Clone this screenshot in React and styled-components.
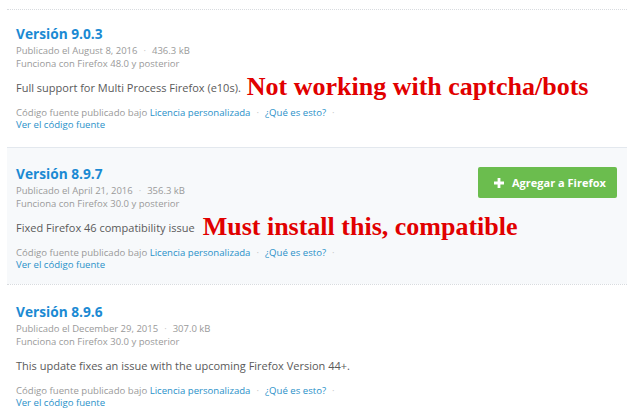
import React from "react";
import styled, { createGlobalStyle } from "styled-components";

const Global = createGlobalStyle`
  html, body { margin: 0; padding: 0; background: #fff; }
  body { font-family: "Open Sans", "Noto Sans", sans-serif; }
`;

const Page = styled.div`
  width: 640px;
  height: 419px;
  box-sizing: border-box;
  padding: 9px 13px 0 7px;
  overflow: hidden;
`;

const Section = styled.section`
  box-sizing: border-box;
  height: ${(p) => p.$h}px;
  padding: ${(p) => p.$pt}px 10px 0 9px;
  border-top: 1px ${(p) => (p.$alt ? "solid #e3e8ee" : "dotted #d8dbdf")};
  background: ${(p) => (p.$alt ? "#f7f9fb" : "#fff")};
`;

const Head = styled.div`
  display: flex;
  justify-content: space-between;
  align-items: flex-start;
`;

const Title = styled.h3`
  margin: 0;
  font-size: 13.7px;
  line-height: 20px;
  font-weight: 700;
  color: #1b8ad3;
`;

const Meta = styled.div`
  font-size: 9.5px;
  line-height: 13px;
  color: #9a9a9a;
`;

const Dot = styled.span`
  color: #c4c4c4;
  margin: 0 6px;
`;

const DescRow = styled.div`
  display: flex;
  align-items: center;
  height: 26px;
  margin-top: 4px;
`;

const Desc = styled.p`
  margin: 0;
  font-size: 11px;
  color: #5a5a5a;
`;

const Note = styled.span`
  font-family: "Liberation Serif", "DejaVu Serif", serif;
  font-weight: 700;
  font-size: 26px;
  color: #e10000;
  margin-left: ${(p) => p.$ml}px;
  line-height: 26px;
  white-space: nowrap;
`;

const Footer = styled.div`
  margin-top: 7px;
  font-size: 9.6px;
  line-height: 12px;
  color: #9a9a9a;
`;

const Link = styled.a`
  color: #2a91c9;
  text-decoration: none;
`;

const AddButton = styled.button`
  display: flex;
  align-items: center;
  gap: 8px;
  width: 139px;
  height: 31px;
  margin-top: 3px;
  padding: 0 0 0 16px;
  border: none;
  border-radius: 2px;
  background: #6bbd4e;
  color: #fff;
  font-family: "Open Sans", sans-serif;
  font-weight: 700;
  font-size: 11px;
  cursor: pointer;
`;

const Plus = () => (
  <svg width="10" height="10" viewBox="0 0 10 10">
    <path d="M3.6 0h2.8v3.6H10v2.8H6.4V10H3.6V6.4H0V3.6h3.6z" fill="#fff" />
  </svg>
);

const versions = [
  {
    v: "9.0.3",
    date: "August 8, 2016",
    size: "436.3 kB",
    ff: "48.0",
    desc: "Full support for Multi Process Firefox (e10s).",
    note: "Not working with captcha/bots",
    ml: 6,
    h: 138,
    pt: 14,
  },
  {
    v: "8.9.7",
    date: "April 21, 2016",
    size: "356.3 kB",
    ff: "30.0",
    desc: "Fixed Firefox 46 compatibility issue",
    note: "Must install this, compatible",
    ml: 8,
    alt: true,
    btn: true,
    h: 137,
    pt: 16,
  },
  {
    v: "8.9.6",
    date: "December 29, 2015",
    size: "307.0 kB",
    ff: "30.0",
    desc: "This update fixes an issue with the upcoming Firefox Version 44+.",
    h: 135,
    pt: 17,
  },
];

export default function App() {
  return (
    <Page>
      <Global />
      {versions.map((r) => (
        <Section key={r.v} $alt={r.alt} $h={r.h} $pt={r.pt}>
          <Head>
            <div>
              <Title>Versión {r.v}</Title>
              <Meta>
                Publicado el {r.date}
                <Dot>·</Dot>
                {r.size}
              </Meta>
              <Meta>Funciona con Firefox {r.ff} y posterior</Meta>
            </div>
            {r.btn && (
              <AddButton>
                <Plus />
                Agregar a Firefox
              </AddButton>
            )}
          </Head>
          <DescRow>
            <Desc>{r.desc}</Desc>
            {r.note && <Note $ml={r.ml}>{r.note}</Note>}
          </DescRow>
          <Footer>
            Código fuente publicado bajo <Link href="#">Licencia personalizada</Link>
            <Dot>·</Dot>
            <Link href="#">¿Qué es esto?</Link>
            <Dot>·</Dot>
            <br />
            <Link href="#">Ver el código fuente</Link>
          </Footer>
        </Section>
      ))}
    </Page>
  );
}
